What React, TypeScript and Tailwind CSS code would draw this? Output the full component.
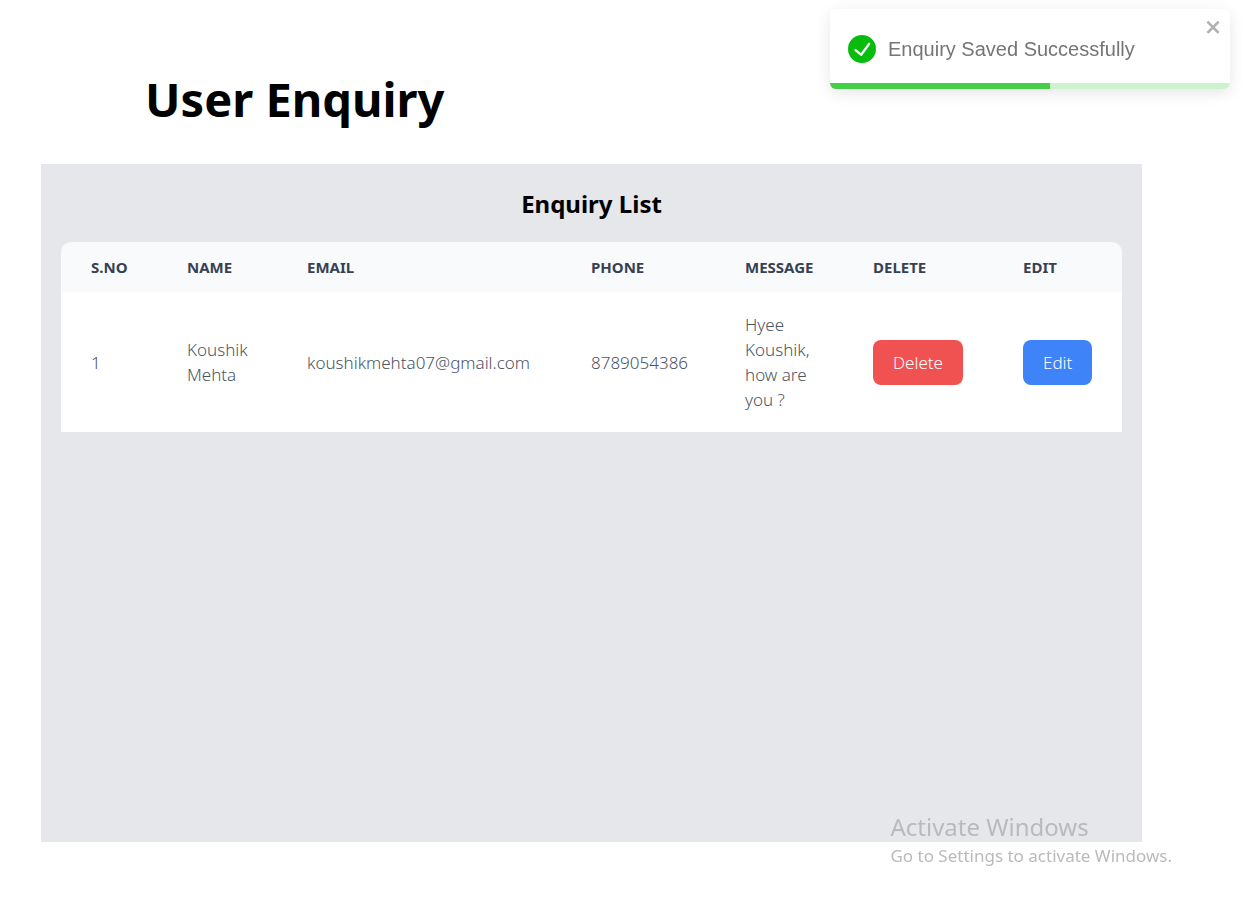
import { useState } from "react";

type Enquiry = {
  name: string;
  email: string;
  phone: string;
  message: string;
};

const enquiries: Enquiry[] = [
  {
    name: "Koushik Mehta",
    email: "koushikmehta07@gmail.com",
    phone: "8789054386",
    message: "Hyee Koushik, how are you ?",
  },
];

const columns = [
  { label: "S.NO", width: "w-[96px]" },
  { label: "Name", width: "w-[120px]" },
  { label: "Email", width: "w-[284px]" },
  { label: "Phone", width: "w-[154px]" },
  { label: "Message", width: "w-[128px]" },
  { label: "Delete", width: "w-[150px]" },
  { label: "Edit", width: "w-[129px]" },
];

function Toast({ message, onClose }: { message: string; onClose: () => void }) {
  return (
    <div
      role="alert"
      className="fixed right-4 top-[9px] flex h-20 w-[400px] items-center gap-3 overflow-hidden rounded-[6px] bg-white px-[18px] font-['Liberation_Sans',sans-serif] text-[20px] text-[#757575] shadow-[0_4px_15px_rgba(0,0,0,0.1)]"
    >
      <svg viewBox="0 0 24 24" className="size-7 shrink-0 fill-[#07bc0c]" aria-hidden="true">
        <path d="M12 0a12 12 0 1012 12A12.014 12.014 0 0012 0zm6.927 8.2l-6.845 9.289a1.011 1.011 0 01-1.43.188l-4.888-3.908a1 1 0 111.25-1.562l4.076 3.261 6.227-8.451a1 1 0 111.61 1.183z" />
      </svg>
      <p className="leading-7">{message}</p>
      <button
        type="button"
        aria-label="close"
        onClick={onClose}
        className="absolute right-[7px] top-[8px] text-black opacity-30"
      >
        <svg viewBox="0 0 14 16" className="h-5 w-[18px] fill-current" aria-hidden="true">
          <path
            fillRule="evenodd"
            d="M7.71 8.23l3.75 3.75-1.48 1.48-3.75-3.75-3.75 3.75L1 11.98l3.75-3.75L1 4.48 2.48 3l3.75 3.75L9.98 3l1.48 1.48-3.75 3.75z"
          />
        </svg>
      </button>
      <div className="absolute inset-x-0 bottom-0 h-[6px] bg-[#cdf2ce]">
        <div className="h-full w-[55%] bg-[#45cf48]" />
      </div>
    </div>
  );
}

export default function App() {
  const [toastOpen, setToastOpen] = useState(true);

  return (
    <div className="min-h-screen bg-white font-['Noto_Sans',sans-serif] text-black">
      <h1 className="pl-[145px] pt-[67px] text-[47px] font-bold leading-[64px]">User Enquiry</h1>

      <main className="ml-[41px] mr-[104px] mt-[33px] min-h-[678px] bg-gray-200 p-5">
        <h2 className="text-center text-[24px] font-bold leading-[40px]">Enquiry List</h2>
        <div className="mt-[18px] overflow-x-auto">
          <table className="w-full table-fixed text-left text-[17px] font-light leading-[25px] text-gray-600">
            <thead className="text-[15px] leading-5 text-gray-700">
              <tr className="uppercase">
                {columns.map((column) => (
                  <th
                    key={column.label}
                    scope="col"
                    className={`${column.width} bg-gray-50 py-[15px] pl-[30px] font-bold first:rounded-tl-[10px] last:rounded-tr-[10px]`}
                  >
                    {column.label}
                  </th>
                ))}
              </tr>
            </thead>
            <tbody>
              {enquiries.map((enquiry, index) => (
                <tr key={enquiry.email} className="bg-white">
                  <td className="py-5 pl-[30px]">{index + 1}</td>
                  <td className="py-5 pl-[30px] pr-5">{enquiry.name}</td>
                  <td className="py-5 pl-[30px]">{enquiry.email}</td>
                  <td className="py-5 pl-[30px]">{enquiry.phone}</td>
                  <td className="py-5 pl-[30px] pr-5">{enquiry.message}</td>
                  <td className="py-5 pl-[30px]">
                    <button type="button" className="block rounded-[8px] bg-[#f05252] px-5 py-[10px] text-white">
                      Delete
                    </button>
                  </td>
                  <td className="py-5 pl-[30px]">
                    <button type="button" className="block rounded-[8px] bg-[#3f83f8] px-5 py-[10px] text-white">
                      Edit
                    </button>
                  </td>
                </tr>
              ))}
            </tbody>
          </table>
        </div>
      </main>

      <aside className="pointer-events-none fixed bottom-[30px] right-[74px] text-[#bababa]">
        <p className="text-[24px] leading-8">Activate Windows</p>
        <p className="text-[17px] leading-[26px]">Go to Settings to activate Windows.</p>
      </aside>

      {toastOpen && <Toast message="Enquiry Saved Successfully" onClose={() => setToastOpen(false)} />}
    </div>
  );
}
